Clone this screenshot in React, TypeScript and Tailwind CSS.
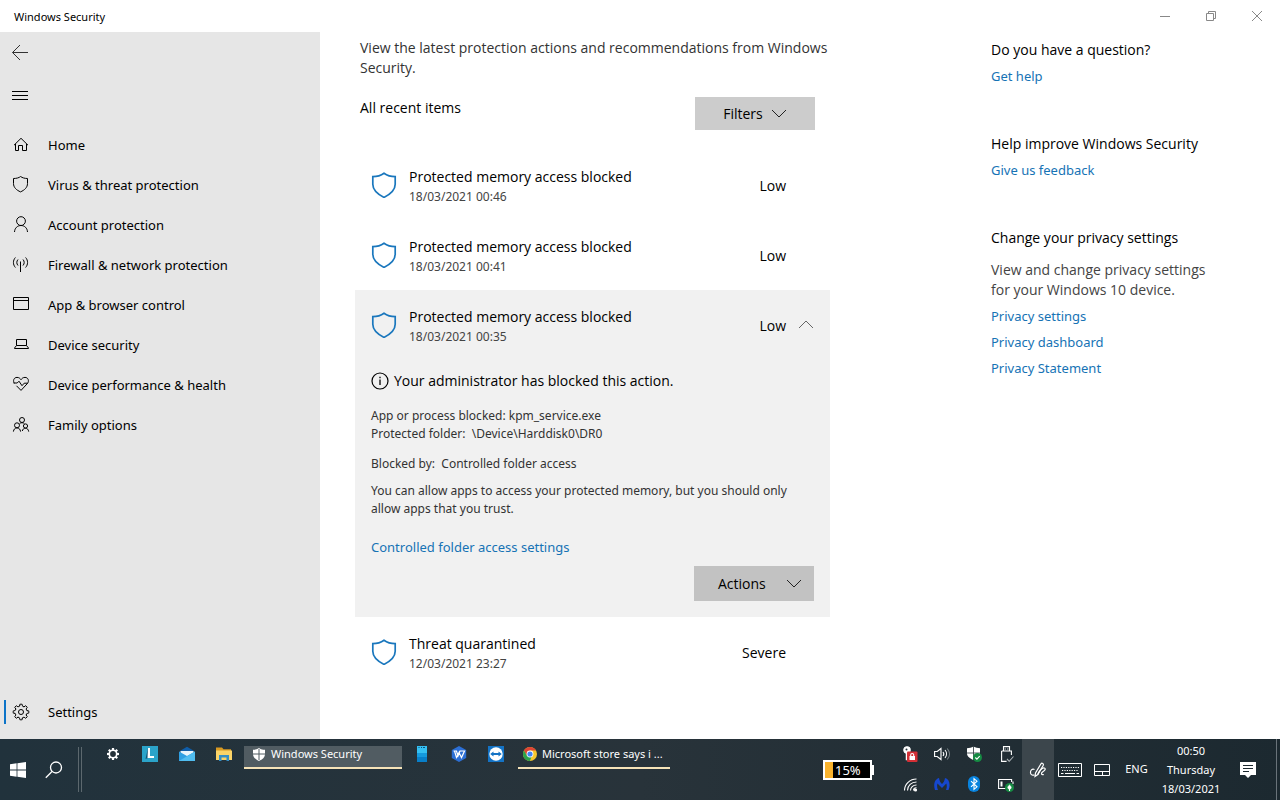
import type { ReactNode } from 'react';

type IconProps = { children: ReactNode; className?: string; size?: number };

function Icon({ children, className = '', size = 18 }: IconProps) {
  return (
    <svg
      viewBox={`0 0 ${size} ${size}`}
      width={size}
      height={size}
      fill="none"
      stroke="currentColor"
      strokeWidth="1"
      className={`shrink-0 ${className}`}
      aria-hidden="true"
    >
      {children}
    </svg>
  );
}

const navItems: { label: string; icon: ReactNode }[] = [
  { label: 'Home', icon: <path d="M2 9.200 9 2.300l7 6.900M3.500 8v6.500h3v-5h4v5h4V8" /> },
  {
    label: 'Virus & threat protection',
    icon: <path d="M1.500 2.500C4.500 2.500 7 1.800 8.600.500 10.300 1.800 12.700 2.500 15.500 2.500v5c0 4-3 6.600-7 8.400C4.500 14.100 1.500 11.500 1.500 7.500z" />,
  },
  {
    label: 'Account protection',
    icon: (
      <>
        <circle cx="9" cy="5.100" r="4.400" />
        <path d="M2.500 16c.2-4 3-6.500 6.500-6.500s6.300 2.500 6.500 6.500" />
      </>
    ),
  },
  {
    label: 'Firewall & network protection',
    icon: (
      <>
        <path d="M8.500 5.500V16" />
        <path d="M3.400 1.500c-2.600 2.800-2.600 7.200 0 10M6 3.500c-1.600 1.800-1.600 4.200 0 6M13.600 1.500c2.600 2.800 2.600 7.200 0 10M11 3.500c1.600 1.800 1.600 4.200 0 6" />
      </>
    ),
  },
  {
    label: 'App & browser control',
    icon: <path d="M1.500 1.500h15v12h-15zM1.500 4.500h15" />,
  },
  {
    label: 'Device security',
    icon: <path d="M4.500 3.500h10v6h-10zM4.500 9.500l-2 2.500v.5h14V12l-2-2.500" />,
  },
  {
    label: 'Device performance & health',
    icon: (
      <>
        <path d="M2.400 7.300C.7 5 1.700 1.400 5 1.400c2 0 3.100 1 4 2.300.9-1.300 2-2.300 4-2.300 3.300 0 4.300 3.600 2.600 5.900L9 14.400 4.500 9.800" />
        <path d="M1.500 7h3.700L7 5.200l3 4.500 2.200-2.500h3.600" />
      </>
    ),
  },
  {
    label: 'Family options',
    icon: (
      <>
        <circle cx="10" cy="4" r="2.500" />
        <circle cx="5" cy="9.300" r="2.500" />
        <circle cx="13.500" cy="10" r="2.100" />
        <path d="M1.400 15.600c.3-2.400 1.700-3.700 3.600-3.700s3.300 1.300 3.600 3.700M10.300 15c.4-1.800 1.500-2.800 3.200-2.800s2.900 1.300 3.200 3.400M7.600 7.700C8.200 7 9 6.700 10 6.700s1.800.3 2.400 1" />
      </>
    ),
  },
];

const gearAngles = [0, 45, 90, 135, 180, 225, 270, 315];

function GearOutline() {
  return (
    <Icon>
      <circle cx="9" cy="9" r="2.500" />
      {gearAngles.map((angle) => (
        <path
          key={angle}
          transform={`rotate(${angle} 9 9)`}
          d="M6.750 3.570 7.500 3.200 7.900 1.200h2.200l.4 2 .750.370 1.590-.01"
          strokeWidth=".9"
        />
      ))}
    </Icon>
  );
}

function Shield() {
  return (
    <Icon size={26} className="text-[#1a77bd]">
      <path
        d="M1.800 4.600C6 4.600 10 3.400 13 1.200c3 2.200 7 3.400 11.200 3.400v7.600c0 6-4.200 9.600-11.200 13.200C6 21.800 1.800 18.200 1.800 12.200z"
        strokeWidth="1.700"
      />
    </Icon>
  );
}

function Chevron({ up = false, className = '' }: { up?: boolean; className?: string }) {
  return (
    <Icon size={16} className={className}>
      <path d={up ? 'M1 11l7-7 7 7' : 'M1 4l7 7 7-7'} />
    </Icon>
  );
}

function ItemSummary({ title, date, level, open = false }: { title: string; date: string; level: string; open?: boolean }) {
  return (
    <button type="button" aria-expanded={open} className="flex h-[70px] w-full items-center pl-4 pr-4 text-left">
      <Shield />
      <span className="ml-3 flex flex-1 flex-col pt-1">
        <span className="text-[14px] leading-5 text-black">{title}</span>
        <span className="font-['Noto_Sans',sans-serif] text-[12px] leading-5 text-[#444]">{date}</span>
      </span>
      <span className="mr-3 pt-[2px] text-[14px] leading-5 text-black">{level}</span>
      <span className="w-4">{open && <Chevron up className="text-[#666]" />}</span>
    </button>
  );
}

function TextLink({ children }: { children: ReactNode }) {
  return (
    <a href="#" className="block font-['Noto_Sans',sans-serif] text-[13px] leading-5 text-[#1673b5]">
      {children}
    </a>
  );
}

function TitleBar() {
  return (
    <header className="flex h-8 items-center justify-between bg-white pl-[14px]">
      <h1 className="pt-[2px] font-['Noto_Sans',sans-serif] text-[11px] leading-4">Windows Security</h1>
      <div className="flex text-[#888]">
        <button type="button" aria-label="Minimize" className="flex h-8 w-[46px] items-center justify-center">
          <Icon size={12}><path d="M1 6.500h10" /></Icon>
        </button>
        <button type="button" aria-label="Restore" className="flex h-8 w-[46px] items-center justify-center">
          <Icon size={12}><path d="M1.500 3.500h7v7h-7zM3.500 3.500v-2h7v7h-2" /></Icon>
        </button>
        <button type="button" aria-label="Close" className="flex h-8 w-[46px] items-center justify-center">
          <Icon size={12}><path d="M1 1l10 10M11 1 1 11" /></Icon>
        </button>
      </div>
    </header>
  );
}

function Sidebar() {
  return (
    <nav className="flex w-80 shrink-0 flex-col bg-[#e6e6e6] font-['Noto_Sans',sans-serif] text-[13px] leading-5">
      <button type="button" aria-label="Back" className="flex h-10 w-10 items-center justify-center text-[#333]">
        <Icon><path d="M17 9.500H1.500M9 2 1.500 9.500 9 17" /></Icon>
      </button>
      <button type="button" aria-label="Menu" className="mb-2 flex h-[45px] w-10 items-end justify-center pb-3">
        <Icon><path d="M1 4.500h16M1 8.500h16M1 12.500h16" /></Icon>
      </button>
      <ul>
        {navItems.map((item) => (
          <li key={item.label}>
            <a href="#" className="flex h-10 items-center gap-[18px] pl-3">
              <Icon>{item.icon}</Icon>
              {item.label}
            </a>
          </li>
        ))}
      </ul>
      <a href="#" className="mb-[7px] mt-auto flex h-10 items-center pl-1">
        <span className="h-6 w-[2px] bg-[#0c74c8]" />
        <span className="ml-[6px] mr-[18px]"><GearOutline /></span>
        Settings
      </a>
    </nav>
  );
}

function History() {
  return (
    <main className="w-[475px] shrink-0 pt-[6px]">
      <p className="pl-[5px] text-[14px] leading-5 text-[#333]">
        View the latest protection actions and recommendations from Windows Security.
      </p>
      <div className="flex items-start justify-between pb-5 pl-[5px] pr-[15px] pt-[19px]">
        <h2 className="pt-px text-[14px] leading-5">All recent items</h2>
        <button type="button" className="flex h-[33px] w-[120px] items-center justify-center gap-2 bg-[#ccc] text-[14px]">
          Filters
          <Chevron className="text-[#222]" />
        </button>
      </div>
      <ItemSummary title="Protected memory access blocked" date="18/03/2021 00:46" level="Low" />
      <ItemSummary title="Protected memory access blocked" date="18/03/2021 00:41" level="Low" />
      <section className="bg-[#f1f1f1] pb-4">
        <ItemSummary title="Protected memory access blocked" date="18/03/2021 00:35" level="Low" open />
        <div className="px-4 pt-[11px] font-['Noto_Sans',sans-serif] text-[12px] leading-[18px] text-[#333]">
          <p className="flex items-center gap-[5px] font-['Open_Sans','Noto_Sans',sans-serif] text-[14px] leading-5 text-black">
            <Icon>
              <circle cx="9" cy="9" r="8" strokeWidth="1.200" />
              <path d="M9 7.500V13M9 4.800v1.500" strokeWidth="1.300" />
            </Icon>
            Your administrator has blocked this action.
          </p>
          <p className="mt-4">
            App or process blocked: kpm_service.exe
            <br />
            Protected folder:&nbsp; \Device\Harddisk0\DR0
          </p>
          <p className="mt-3">Blocked by:&nbsp; Controlled folder access</p>
          <p className="mb-[19px] mt-[9px]">
            You can allow apps to access your protected memory, but you should only allow apps that you trust.
          </p>
          <TextLink>Controlled folder access settings</TextLink>
          <button
            type="button"
            className="ml-auto mt-[9px] flex h-[35px] w-[120px] items-center justify-between bg-[#c2c2c2] pl-6 pr-3 font-['Open_Sans','Noto_Sans',sans-serif] text-[14px] text-black"
          >
            Actions
            <Chevron className="text-[#222]" />
          </button>
        </div>
      </section>
      <ItemSummary title="Threat quarantined" date="12/03/2021 23:27" level="Severe" />
    </main>
  );
}

function Help() {
  return (
    <aside className="w-[289px] shrink-0 pr-[60px] pt-2">
      <h2 className="text-[14px] leading-5">Do you have a question?</h2>
      <div className="mb-12 mt-[6px]"><TextLink>Get help</TextLink></div>
      <h2 className="text-[14px] leading-5">Help improve Windows Security</h2>
      <div className="mb-12 mt-[6px]"><TextLink>Give us feedback</TextLink></div>
      <h2 className="text-[14px] leading-5">Change your privacy settings</h2>
      <p className="mt-3 text-[14px] leading-5 text-[#444]">
        View and change privacy settings for your Windows 10 device.
      </p>
      <div className="mt-[6px] flex flex-col gap-[6px]">
        <TextLink>Privacy settings</TextLink>
        <TextLink>Privacy dashboard</TextLink>
        <TextLink>Privacy Statement</TextLink>
      </div>
    </aside>
  );
}

function AppButton({ label, children }: { label: string; children: ReactNode }) {
  return (
    <button type="button" aria-label={label} className="flex h-4 w-[37px] items-center justify-center">
      <svg viewBox="0 0 16 16" width="16" height="16" aria-hidden="true">{children}</svg>
    </button>
  );
}

function TrayButton({ label, children }: { label: string; children: ReactNode }) {
  return (
    <button type="button" aria-label={label} className="flex h-[30px] w-8 items-center justify-center">
      <svg viewBox="0 0 16 16" width="16" height="16" fill="none" stroke="#fff" strokeWidth="1.100" aria-hidden="true">
        {children}
      </svg>
    </button>
  );
}

function Taskbar() {
  return (
    <footer className="flex h-[61px] shrink-0 bg-linear-to-r from-[#21323c] via-[#28333a] to-[#1c2930] font-['Noto_Sans',sans-serif] text-[11px] text-white">
      <button type="button" aria-label="Start" className="flex w-9 items-center justify-center">
        <svg viewBox="0 0 16 16" width="16" height="16" fill="#fff" aria-hidden="true">
          <path d="M0 2.200 6.600 1.300v6.200H0zM7.400 1.200 16 0v7.500H7.400zM0 8.400h6.600v6.300L0 13.800zM7.400 8.400H16V16l-8.600-1.200z" />
        </svg>
      </button>
      <button type="button" aria-label="Search" className="flex w-9 items-center justify-center">
        <svg viewBox="0 0 18 18" width="18" height="18" fill="none" stroke="#fff" strokeWidth="1.300" aria-hidden="true">
          <circle cx="11" cy="6.500" r="5.500" />
          <path d="M7 10.500.8 16.800" />
        </svg>
      </button>
      <div className="ml-[6px] mt-2 h-[45px] w-1 border-x border-[#5c686e]" />
      <div className="ml-3 flex items-start pt-[7px]">
        <AppButton label="Settings">
          <g fill="#fff">
            {[0, 45, 90, 135].map((angle) => (
              <rect key={angle} x="6.900" y="2" width="2.200" height="12" transform={`rotate(${angle} 8 8)`} />
            ))}
            <circle cx="8" cy="8" r="4.500" />
          </g>
          <circle cx="8" cy="8" r="2.900" fill="#243139" />
        </AppButton>
        <AppButton label="Lenovo Vantage">
          <path d="M0 0h16v16H0z" fill="#2ba3c9" />
          <path d="M6 2 3.500 13l2.500-1z" fill="#125575" />
          <path d="M6 2h2v8h4v2H5.500z" fill="#fff" />
        </AppButton>
        <AppButton label="Mail">
          <path d="M0 5.500 8 .800l8 4.700z" fill="#0f5da8" />
          <path d="M1.500 5h13v5h-13z" fill="#e8f4fb" />
          <path d="M0 5.500 8 10l8-4.500V15H0z" fill="#2f9fe2" />
          <path d="M0 15 16 5.500V15z" fill="#50bdf0" />
        </AppButton>
        <AppButton label="File Explorer">
          <path d="M0 1.500h6l1.500 1.800H15V7H0z" fill="#d99a22" />
          <path d="M0 4.500h16V14H0z" fill="#fbd468" />
          <path d="M3 15V9h10v6h-2.500v-3.500h-5V15z" fill="#368fc5" />
        </AppButton>
        <button
          type="button"
          className="ml-[2px] flex h-[23px] w-[158px] items-center gap-[6px] border-b-2 border-[#f6e3b8] bg-[#515c62] pb-[5px] pl-[9px]"
        >
          <svg viewBox="0 0 12 13" width="12" height="13" aria-hidden="true">
            <path d="M6 0c2 1.500 4 1.800 6 1.800v4C12 9.500 9.500 11.500 6 13 2.500 11.500 0 9.500 0 5.800v-4C2 1.800 4 1.500 6 0z" fill="#fff" />
            <path d="M6 1v11M0 6h12" stroke="#515c62" />
          </svg>
          Windows Security
        </button>
        <div className="flex pl-px">
          <AppButton label="Your Phone">
            <path d="M3 0h10v16H3z" fill="#087fc9" />
            <path d="M3 0h10v7H3z" fill="#35c0f2" />
            <path d="M3 7h10v4H3z" fill="#159add" />
            <path d="M4.500 1.500h1m1.500 0h1m1 0h2" stroke="#0a527d" />
          </AppButton>
          <AppButton label="WPS Office">
            <path d="M8 0l7.200 4v8L8 16 .8 12V4z" fill="#2c6fd5" />
            <path d="M2.500 5h3L7 10l2-5h4.500l-3 6.500L8 6.500 5.500 11.500 3.500 5" fill="none" stroke="#fff" strokeWidth="1.200" />
          </AppButton>
          <AppButton label="TeamViewer">
            <path d="M0 0h16v16H0z" fill="#1473c5" />
            <circle cx="8" cy="8" r="6.700" fill="#fff" />
            <path d="M2.200 8 5.500 5.500V7h5V5.500L13.800 8l-3.300 2.500V9h-5v1.500z" fill="#1473c5" />
          </AppButton>
        </div>
        <button
          type="button"
          className="ml-1 flex h-[23px] w-[152px] items-center gap-[5px] border-b-2 border-[#f6e3b8] pb-[5px] pl-[5px]"
        >
          <svg viewBox="0 0 14 14" width="14" height="14" className="shrink-0" aria-hidden="true">
            <circle cx="7" cy="7" r="7" fill="#f6c62e" />
            <path d="M.940 3.500A7 7 0 0 1 13.060 3.500H7L4 8.700z" fill="#df4435" />
            <path d="M.940 3.500 4 8.700l4.500.8L7 14A7 7 0 0 1 .940 3.500z" fill="#2ba24c" />
            <circle cx="7" cy="7" r="3.400" fill="#fff" />
            <circle cx="7" cy="7" r="2.600" fill="#4285f4" />
          </svg>
          <span className="whitespace-nowrap">Microsoft store says i ...</span>
        </button>
      </div>
      <div className="ml-auto flex">
        <div className="flex items-center">
          <div className="flex h-5 w-[49px] border-2 border-white bg-black">
            <span className="w-2 bg-[#f9b22c]" />
            <span className="pl-[2px] text-[13px] leading-4">15%</span>
          </div>
          <span className="h-[10px] w-[2px] bg-white" />
        </div>
        <div className="ml-5 grid grid-cols-4 content-start">
          <TrayButton label="Password manager">
            <circle cx="5" cy="4" r="3.200" fill="#fff" />
            <path d="M5 6v7h2.500" strokeWidth="2.500" />
            <circle cx="4.500" cy="3.500" r="1" fill="#28333a" stroke="none" />
            <rect x="5" y="5.500" width="10.500" height="10.500" rx="1" fill="#d32f35" stroke="none" />
            <path d="M7.500 10h5.500v4H7.500z" fill="#fff" stroke="none" />
            <path d="M8.700 10.500V9a1.500 1.500 0 0 1 3 0v1.500" />
          </TrayButton>
          <TrayButton label="Volume">
            <path d="M.6 5.500h2.600L7 2.500v11l-3.800-3H.6zM9 6c1 1.200 1 2.800 0 4M11 4c2 2.300 2 5.700 0 8" />
            <path d="M13.200 2.500c3 3.300 3 7.700 0 11" stroke="#7b858a" />
          </TrayButton>
          <TrayButton label="Protection status">
            <path d="M7.500.500c2 1.300 4.300 1.700 6.500 1.700v5.300c0 3-3 5-6.500 6.500C4 12.500 1 10.500 1 7.500V2.200C3.500 2.200 5.500 1.800 7.500.500z" fill="#fff" stroke="none" />
            <path d="M7.500 0v14M1 7h13" stroke="#28333a" strokeWidth=".8" />
            <circle cx="11.500" cy="11.500" r="4.500" fill="#168b43" stroke="none" />
            <path d="m9.300 11.500 1.600 1.600 2.800-3" />
          </TrayButton>
          <TrayButton label="Safely remove hardware">
            <path d="M5.500 5V.600h6V5M3.600 5h9.800v4M3.600 5v10.400h5M7.200 2.400v1M9.800 2.400v1" />
            <path d="M9 13l2.200 2.300L15.500 10.500" stroke="#aab1b5" />
          </TrayButton>
          <TrayButton label="Wi-Fi">
            <path d="M2.500 14.500C2.500 8 8 3 14.500 3M5.500 14.500c0-5 4-8.500 9-8.500M8.500 14.500c0-3 2.500-5.500 6-5.500M11.500 14.500c0-1.500 1.200-2.800 3-2.800" />
            <circle cx="13.500" cy="14" r="1" fill="#fff" />
          </TrayButton>
          <TrayButton label="Malwarebytes">
            <path d="M1 14C-1 8 1 3 5 2c.4 2.500 1.300 4.500 3 6 1.700-1.500 2.600-3.500 3-6 4 1 6 6 3.500 12H12c1-2.500 1-4.500.3-6.500L8 12 3.500 7.500C2.800 9.500 3 12 4 14z" fill="#1647ce" stroke="none" />
          </TrayButton>
          <TrayButton label="Bluetooth">
            <rect x="2" y="0" width="12" height="16" rx="6" fill="#0883de" stroke="none" />
            <path d="m5 5.200 6 5.600L8 13.300V2.700l3 2.500-6 5.600" />
          </TrayButton>
          <TrayButton label="Battery">
            <path d="M8 12.500H.6v-9h13V6M15 5.500V8" />
            <path d="M3.500 5.500v5" strokeWidth="2" />
            <circle cx="11.500" cy="11.500" r="4.500" fill="#168b43" stroke="none" />
            <path d="M11.500 9c-2.500 2-2 4 0 4s2.500-2 0-4z" fill="#fff" strokeWidth=".6" />
            <path d="M11.500 15v-2" />
          </TrayButton>
        </div>
        <button type="button" aria-label="Windows Ink Workspace" className="flex w-8 items-center justify-center bg-[#3c464c]">
          <svg viewBox="0 0 18 18" width="18" height="18" fill="none" stroke="#fff" strokeWidth="1.200" aria-hidden="true">
            <path d="M5.500 8.500C3 7.500 1.200 9.500 1.500 12c.3 2 2.500 2.500 4 2" />
            <path d="M6 15.500 6.500 12 12 2.800c.8-1.200 3-.2 2.300 1.400L8.800 13.500z" />
            <path d="M8.800 13.500C10 10 13 6.500 15.300 7c2.200.8 0 2.800-1.800 4-1.800 1.400-1.200 3.200 1.300 2.500" />
          </svg>
        </button>
        <button type="button" aria-label="Touch keyboard" className="flex w-8 items-center justify-center">
          <svg viewBox="0 0 24 14" width="24" height="14" fill="none" stroke="#fff" aria-hidden="true">
            <path d="M.5.500h23v13H.5z" />
            <path d="M3 4.500h18M4 7.500h16" strokeDasharray="1.200 1.200" />
            <path d="M3 10.500h2.500m1.500 0h10m1.500 0H21" />
          </svg>
        </button>
        <button type="button" aria-label="Touchpad" className="flex w-8 items-center justify-center">
          <svg viewBox="0 0 16 12" width="16" height="12" fill="none" stroke="#fff" aria-hidden="true">
            <path d="M.5.500h15v11H.5zM.5 7.500h15M8.500 7.500v4" />
          </svg>
        </button>
        <button type="button" className="w-[37px] text-center">ENG</button>
        <button type="button" className="w-[72px] text-center leading-[19px]">
          00:50
          <br />
          Thursday
          <br />
          18/03/2021
        </button>
        <button type="button" aria-label="Notifications" className="flex w-[41px] items-center justify-center">
          <svg viewBox="0 0 16 16" width="16" height="16" fill="none" aria-hidden="true">
            <path d="M0 0h16v13h-5l-3 3-3-3H0z" fill="#fff" />
            <path d="M3 3.500h10M3 6.500h10M3 9.500h6" stroke="#1c2930" />
          </svg>
        </button>
        <div className="ml-2 mr-[3px] w-px bg-[#69737a]" />
      </div>
    </footer>
  );
}

export default function App() {
  return (
    <div className="flex min-h-screen flex-col bg-white font-['Open_Sans','Noto_Sans',sans-serif] text-black">
      <TitleBar />
      <div className="flex flex-1">
        <Sidebar />
        <div className="flex flex-1 justify-between pl-[35px]">
          <History />
          <Help />
        </div>
      </div>
      <Taskbar />
    </div>
  );
}
